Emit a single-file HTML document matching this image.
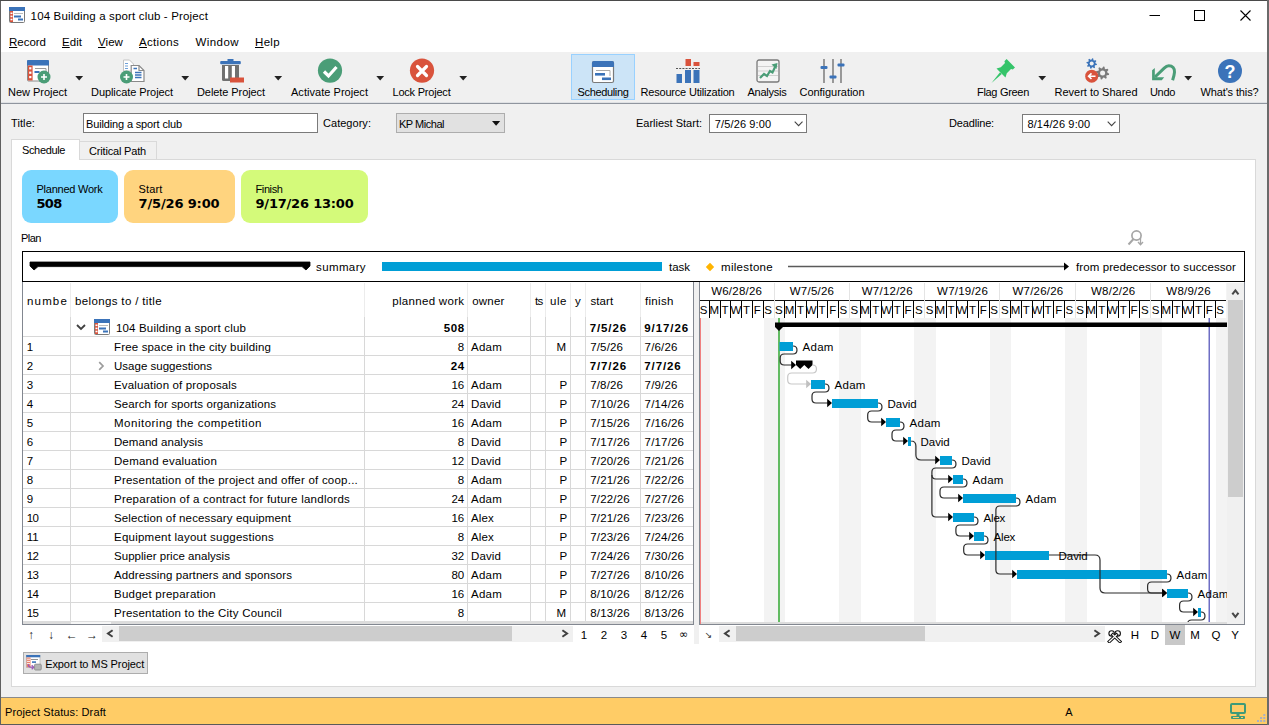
<!DOCTYPE html>
<html lang="en"><head><meta charset="utf-8"><title>104 Building a sport club - Project</title>
<style>
html,body{margin:0;padding:0}
body{width:1269px;height:725px;overflow:hidden;position:relative;background:#f0f0f0;font-family:"Liberation Sans",sans-serif;font-size:11px;color:#000}
.b{position:absolute;box-sizing:border-box}
.t{position:absolute;white-space:pre;display:block}
u{text-decoration:underline;text-underline-offset:1px}
</style></head>
<body>
<div class="b" style="left:0px;top:0px;width:1269px;height:30px;background:#fff"></div>
<div class="b" style="left:0px;top:30px;width:1269px;height:22px;background:#fff"></div>
<div class="b" style="left:0px;top:52px;width:1269px;height:51px;background:#f0f0f0"></div>
<div class="b" style="left:0px;top:102px;width:1269px;height:1px;background:#dfe1e4"></div>
<div class="b" style="left:0px;top:103px;width:1269px;height:1px;background:#8f959e"></div>
<svg class="b" style="left:9px;top:7px;" width="16" height="16" viewBox="0 0 16 16"><rect x="0.5" y="0.5" width="15" height="15" rx="1" fill="#fff" stroke="#7a7a7a"/><rect x="0" y="0" width="16" height="4" fill="#3b73b9"/><rect x="1" y="4" width="3" height="11" fill="#d9533c"/><rect x="1.5" y="5.5" width="2" height="1.6" fill="#fff"/><rect x="1.5" y="8.6" width="2" height="1.6" fill="#fff"/><rect x="1.5" y="11.7" width="2" height="1.6" fill="#fff"/><rect x="5" y="6" width="9" height="1" fill="#bbb"/><rect x="5" y="8.5" width="7" height="2" fill="#3b73b9"/><rect x="9" y="11.5" width="5" height="2" fill="#3b73b9"/></svg>
<span class="t" style="font-size:11.5px;line-height:16px;top:8px;letter-spacing:0.158px;left:30.6px;">104 Building a sport club - Project</span>
<svg class="b" style="left:1149px;top:9px;" width="12" height="12" viewBox="0 0 12 12"><path d="M0.5 6.5H11" stroke="#000" stroke-width="1" fill="none"/></svg>
<svg class="b" style="left:1194px;top:9.5px;" width="12" height="12" viewBox="0 0 12 12"><rect x="0.5" y="0.5" width="10" height="10" stroke="#000" stroke-width="1" fill="none"/></svg>
<svg class="b" style="left:1239.7px;top:9.7px;" width="12" height="12" viewBox="0 0 12 12"><path d="M0.5 0.5L10.5 10.5M10.5 0.5L0.5 10.5" stroke="#000" stroke-width="1.1" fill="none"/></svg>
<span class="t" style="font-size:11.5px;line-height:16px;top:33.5px;letter-spacing:-0.016px;left:9px;"><u>R</u>ecord</span>
<span class="t" style="font-size:11.5px;line-height:16px;top:33.5px;letter-spacing:0.043px;left:62px;"><u>E</u>dit</span>
<span class="t" style="font-size:11.5px;line-height:16px;top:33.5px;letter-spacing:0.066px;left:98px;"><u>V</u>iew</span>
<span class="t" style="font-size:11.5px;line-height:16px;top:33.5px;letter-spacing:0.326px;left:139px;"><u>A</u>ctions</span>
<span class="t" style="font-size:11.5px;line-height:16px;top:33.5px;letter-spacing:0.449px;left:195.4px;">Window</span>
<span class="t" style="font-size:11.5px;line-height:16px;top:33.5px;letter-spacing:0.332px;left:255px;"><u>H</u>elp</span>
<div class="b" style="left:571px;top:54px;width:64px;height:46px;background:#cce4f7;border:1px solid #99d1ff"></div>
<svg class="b" style="left:26px;top:59.3px;overflow:visible" width="24" height="24" viewBox="0 0 24 24"><rect x="1.5" y="1.5" width="21" height="20.5" rx="1" fill="#fff" stroke="#8a8a8a"/><path d="M1 2a1 1 0 0 1 1-1H22a1 1 0 0 1 1 1V6.5H1Z" fill="#3b73b9"/><rect x="2" y="6.5" width="4.6" height="15" fill="#d9533c"/><rect x="3.2" y="8.2" width="2.2" height="2.2" fill="#fff"/><rect x="3.2" y="12.6" width="2.2" height="2.2" fill="#fff"/><rect x="3.2" y="17" width="2.2" height="2.2" fill="#fff"/><path d="M9 9.5H20V13" fill="none" stroke="#9a9a9a" stroke-width="1"/><rect x="8.5" y="12" width="5" height="2" fill="#3b73b9"/><circle cx="18" cy="18" r="6.5" fill="#4a9d77"/><path d="M15 18H21M18 15V21" stroke="#fff" stroke-width="1.6"/></svg>
<span class="t" style="font-size:11px;line-height:16px;top:83.5px;letter-spacing:-0.027px;left:8px;">New Project</span>
<svg class="b" style="left:75.3px;top:75.8px;" width="9" height="5" viewBox="0 0 9 5"><path d="M0.3 0H8.100L4.200 4.600Z" fill="#222"/></svg>
<svg class="b" style="left:120px;top:59px;overflow:visible" width="24" height="24" viewBox="0 0 24 24"><path d="M3.5 1H9.5L13.5 5V12H3.5Z" fill="#fff" stroke="#c4c4c4"/><path d="M5 4.5h3M5 7h3M5 9.500h3" stroke="#6fa0d8" stroke-width="1.2"/><path d="M11.200 6.500H19L24 11.5V22.500H11.200Z" fill="#fff" stroke="#8a8a8a" stroke-width="1.2"/><path d="M19 6.500V11.5H24" fill="none" stroke="#8a8a8a" stroke-width="1.2"/><path d="M13.500 9.500h3.500M15 13.500h6.500M15 16h6.500M15 18.500h6.500" stroke="#3b73b9" stroke-width="1.3"/><circle cx="6.5" cy="18" r="6.5" fill="#4a9d77"/><path d="M3.5 18H9.5M6.5 15V21" stroke="#fff" stroke-width="1.6"/></svg>
<span class="t" style="font-size:11px;line-height:16px;top:83.5px;letter-spacing:-0.068px;left:91px;">Duplicate Project</span>
<svg class="b" style="left:181.3px;top:75.8px;" width="9" height="5" viewBox="0 0 9 5"><path d="M0.3 0H8.100L4.200 4.600Z" fill="#222"/></svg>
<svg class="b" style="left:219px;top:59px;overflow:visible" width="24" height="24" viewBox="0 0 24 24"><rect x="8.5" y="0" width="6" height="2.2" fill="#3b73b9"/><rect x="1.2" y="2" width="20.6" height="3.3" rx="1" fill="#3b73b9"/><path d="M3 6H20V20.5a1.500 1.500 0 0 1-1.500 1.500H4.500A1.500 1.500 0 0 1 3 20.5Z" fill="#707070"/><rect x="6" y="7" width="3.200" height="12.500" fill="#fff"/><rect x="12.800" y="7" width="3.200" height="12.500" fill="#fff"/><rect x="11" y="18.500" width="14" height="5" fill="#d9533c"/></svg>
<span class="t" style="font-size:11px;line-height:16px;top:83.5px;letter-spacing:-0.078px;left:197px;">Delete Project</span>
<svg class="b" style="left:274.3px;top:75.8px;" width="9" height="5" viewBox="0 0 9 5"><path d="M0.3 0H8.100L4.200 4.600Z" fill="#222"/></svg>
<svg class="b" style="left:318.2px;top:59px;overflow:visible" width="24" height="24" viewBox="0 0 24 24"><circle cx="12" cy="11.6" r="12.1" fill="#4a9d77"/><path d="M6 12.5L10.5 17L18.5 8" fill="none" stroke="#fff" stroke-width="3.2" stroke-linecap="butt"/></svg>
<span class="t" style="font-size:11px;line-height:16px;top:83.5px;letter-spacing:0.036px;left:291px;">Activate Project</span>
<svg class="b" style="left:376.3px;top:75.8px;" width="9" height="5" viewBox="0 0 9 5"><path d="M0.3 0H8.100L4.200 4.600Z" fill="#222"/></svg>
<svg class="b" style="left:410px;top:59px;overflow:visible" width="24" height="24" viewBox="0 0 24 24"><circle cx="12" cy="11.6" r="12.1" fill="#d9533c"/><path d="M7.5 7.5L16.5 16.5M16.5 7.5L7.5 16.5" fill="none" stroke="#fff" stroke-width="3.2" stroke-linecap="round"/></svg>
<span class="t" style="font-size:11px;line-height:16px;top:83.5px;letter-spacing:-0.211px;left:392.5px;">Lock Project</span>
<svg class="b" style="left:459.3px;top:75.8px;" width="9" height="5" viewBox="0 0 9 5"><path d="M0.3 0H8.100L4.200 4.600Z" fill="#222"/></svg>
<svg class="b" style="left:591px;top:59.7px;overflow:visible" width="24" height="24" viewBox="0 0 24 24"><rect x="1.5" y="1.5" width="21" height="21" rx="1.5" fill="#fff" stroke="#7a7a7a" stroke-width="1.2"/><path d="M1 3a2 2 0 0 1 2-2H21a2 2 0 0 1 2 2V7H1Z" fill="#3b73b9"/><path d="M5 10.5H19V16" fill="none" stroke="#aaa" stroke-width="1"/><rect x="4" y="13" width="10" height="2.6" fill="#3b73b9"/><rect x="11" y="17.5" width="9" height="2.6" fill="#3b73b9"/></svg>
<span class="t" style="font-size:11px;line-height:16px;top:83.5px;letter-spacing:-0.344px;left:577.5px;">Scheduling</span>
<svg class="b" style="left:676px;top:59px;overflow:visible" width="24" height="24" viewBox="0 0 24 24"><rect x="9.500" y="0" width="5.500" height="7" fill="#d9533c"/><rect x="17.500" y="3" width="6" height="4" fill="#d9533c"/><path d="M0 9.500H24" stroke="#555" stroke-width="1" stroke-dasharray="2 1.200"/><rect x="0.500" y="15" width="5.500" height="9" fill="#3b73b9"/><rect x="9" y="11" width="6" height="13" fill="#3b73b9"/><rect x="17.500" y="11" width="6" height="13" fill="#3b73b9"/></svg>
<span class="t" style="font-size:11px;line-height:16px;top:83.5px;letter-spacing:-0.191px;left:640.5px;">Resource Utilization</span>
<svg class="b" style="left:756px;top:59px;overflow:visible" width="24" height="24" viewBox="0 0 24 24"><rect x="1" y="1" width="22" height="22" rx="2" fill="#f4f4f4" stroke="#7a7a7a" stroke-width="1.3"/><path d="M2 7.5H22M2 12H22M2 16.5H22" stroke="#d0d0d0" stroke-width="1"/><path d="M4 19L8 15L11 17L14 12L16.5 13.5L19.5 7" fill="none" stroke="#4a9d77" stroke-width="2.2" stroke-linejoin="miter"/><path d="M15.5 5.5L21.5 4L20.5 10Z" fill="#4a9d77"/></svg>
<span class="t" style="font-size:11px;line-height:16px;top:83.5px;letter-spacing:-0.246px;left:747.5px;">Analysis</span>
<svg class="b" style="left:820px;top:59px;overflow:visible" width="24" height="24" viewBox="0 0 24 24"><path d="M4 0V24M13 0V24M21 0V24" stroke="#6a6a6a" stroke-width="1.3"/><rect x="0.5" y="7" width="7" height="3" rx="1" fill="#3b73b9"/><rect x="9.5" y="16.5" width="7" height="3" rx="1" fill="#3b73b9"/><rect x="17.5" y="4.5" width="7" height="3" rx="1" fill="#3b73b9"/></svg>
<span class="t" style="font-size:11px;line-height:16px;top:83.5px;letter-spacing:-0.034px;left:799.5px;">Configuration</span>
<svg class="b" style="left:991px;top:59px;overflow:visible" width="24" height="24" viewBox="0 0 24 24"><g fill="#35c46a"><path d="M0.5 24L9 13.2L10.8 15Z"/><path d="M5.5 9.5L14.5 18.5L15.8 14.2L20 10L21.8 10.6L24 8.4L15.6 0L13.4 2.2L14 4L9.8 8.2Z"/></g></svg>
<span class="t" style="font-size:11px;line-height:16px;top:83.5px;letter-spacing:-0.303px;left:977px;">Flag Green</span>
<svg class="b" style="left:1038.3px;top:75.8px;" width="9" height="5" viewBox="0 0 9 5"><path d="M0.3 0H8.100L4.200 4.600Z" fill="#222"/></svg>
<svg class="b" style="left:1083px;top:59px;overflow:visible" width="24" height="24" viewBox="0 0 24 24"><polygon points="13.97,5.02 13.77,6.04 12.07,6.30 11.65,6.92 12.06,8.60 11.20,9.17 9.81,8.15 9.07,8.30 8.18,9.77 7.16,9.57 6.90,7.87 6.28,7.45 4.60,7.86 4.03,7.00 5.05,5.61 4.90,4.87 3.43,3.98 3.63,2.96 5.33,2.70 5.75,2.08 5.34,0.40 6.20,-0.17 7.59,0.85 8.33,0.70 9.22,-0.77 10.24,-0.57 10.50,1.13 11.12,1.55 12.80,1.14 13.37,2.00 12.35,3.39 12.50,4.13" fill="#3b73b9"/><circle cx="8.7" cy="4.5" r="2.01" fill="#f0f0f0"/><polygon points="26.17,14.65 25.92,15.92 23.79,16.24 23.27,17.01 23.79,19.10 22.71,19.82 20.98,18.55 20.07,18.73 18.95,20.57 17.68,20.32 17.36,18.19 16.59,17.67 14.50,18.19 13.78,17.11 15.05,15.38 14.87,14.47 13.03,13.35 13.28,12.08 15.41,11.76 15.93,10.99 15.41,8.90 16.49,8.18 18.22,9.45 19.13,9.27 20.25,7.43 21.52,7.68 21.84,9.81 22.61,10.33 24.70,9.81 25.42,10.89 24.15,12.62 24.33,13.53" fill="#7a7a7a"/><circle cx="19.6" cy="14" r="2.51" fill="#f0f0f0"/><circle cx="8.7" cy="17.2" r="6.5" fill="#d9533c"/><path d="M12.500 17.200H6M8.500 14.400L5.600 17.200L8.500 20" fill="none" stroke="#fff" stroke-width="1.6"/></svg>
<span class="t" style="font-size:11px;line-height:16px;top:83.5px;letter-spacing:-0.01px;left:1054.5px;">Revert to Shared</span>
<svg class="b" style="left:1150px;top:59.7px;overflow:visible" width="24" height="24" viewBox="0 0 24 24"><path d="M5 17L14.200 8.100C16 6.300 17.500 5.700 18.800 5.700C22.500 5.700 24.800 8.500 24.500 12.100C24.300 15 23.500 17.500 22.600 20.200" fill="none" stroke="#4a9d77" stroke-width="3"/><path d="M2.100 20.200V10.300L4.800 8V17.300H14.200L11.800 20.200Z" fill="#4a9d77"/></svg>
<span class="t" style="font-size:11px;line-height:16px;top:83.5px;letter-spacing:-0.324px;left:1150px;">Undo</span>
<svg class="b" style="left:1184.3px;top:75.8px;" width="9" height="5" viewBox="0 0 9 5"><path d="M0.3 0H8.100L4.200 4.600Z" fill="#222"/></svg>
<svg class="b" style="left:1217.8px;top:59px;overflow:visible" width="24" height="24" viewBox="0 0 24 24"><circle cx="12" cy="12" r="12" fill="#3b73b9"/><text x="12" y="18.5" text-anchor="middle" font-family="Liberation Sans, sans-serif" font-weight="bold" font-size="18" fill="#fff">?</text></svg>
<span class="t" style="font-size:11px;line-height:16px;top:83.5px;letter-spacing:-0.132px;left:1200.5px;">What's this?</span>
<span class="t" style="font-size:11px;line-height:16px;top:115px;letter-spacing:0.094px;left:11px;">Title:</span>
<div class="b" style="left:83px;top:113px;width:235px;height:20px;background:#fff;border:1px solid #7a7a7a"></div>
<span class="t" style="font-size:11px;line-height:16px;top:115.5px;letter-spacing:-0.146px;left:86px;">Building a sport club</span>
<span class="t" style="font-size:11px;line-height:16px;top:115px;letter-spacing:0.033px;left:323px;">Category:</span>
<div class="b" style="left:396px;top:113px;width:109px;height:20px;background:#e1e1e1;border:1px solid #adadad"></div>
<span class="t" style="font-size:11px;line-height:16px;top:115.5px;letter-spacing:-0.481px;left:399px;">KP Michal</span>
<svg class="b" style="left:491.7px;top:120.6px;" width="9" height="5" viewBox="0 0 9 5"><path d="M0 0H8.200L4.100 4.800Z" fill="#111"/></svg>
<span class="t" style="font-size:11px;line-height:16px;top:115px;letter-spacing:-0.002px;left:636px;">Earliest Start:</span>
<div class="b" style="left:709px;top:113.8px;width:98px;height:18.8px;background:#fff;border:1px solid #7a7a7a"></div>
<span class="t" style="font-size:11px;line-height:16px;top:115.8px;letter-spacing:0.131px;left:714.8px;">7/5/26 9:00</span>
<svg class="b" style="left:793.5px;top:121px;" width="10" height="6" viewBox="0 0 10 6"><path d="M0.700 0.700L4.600 4.700L8.500 0.700" fill="none" stroke="#444" stroke-width="1.100"/></svg>
<span class="t" style="font-size:11px;line-height:16px;top:115px;letter-spacing:-0.165px;left:949px;">Deadline:</span>
<div class="b" style="left:1022px;top:113.8px;width:98px;height:18.8px;background:#fff;border:1px solid #7a7a7a"></div>
<span class="t" style="font-size:11px;line-height:16px;top:115.8px;letter-spacing:0.152px;left:1027.4px;">8/14/26 9:00</span>
<svg class="b" style="left:1106.5px;top:121px;" width="10" height="6" viewBox="0 0 10 6"><path d="M0.700 0.700L4.600 4.700L8.500 0.700" fill="none" stroke="#444" stroke-width="1.100"/></svg>
<div class="b" style="left:11px;top:159px;width:1245px;height:528px;background:#fff;border:1px solid #d9d9d9"></div>
<div class="b" style="left:79px;top:141px;width:78px;height:19px;background:#f0f0f0;border:1px solid #d9d9d9"></div>
<span class="t" style="font-size:11px;line-height:16px;top:143px;letter-spacing:-0.177px;left:89px;">Critical Path</span>
<div class="b" style="left:11px;top:139px;width:69px;height:21px;background:#fff;border:1px solid #d9d9d9;border-bottom:none"></div>
<span class="t" style="font-size:11px;line-height:16px;top:142px;letter-spacing:-0.359px;left:22px;">Schedule</span>
<div class="b" style="left:22px;top:170px;width:96px;height:53px;background:#7ad7ff;border-radius:9px"></div>
<span class="t" style="font-size:11px;line-height:16px;top:180.5px;letter-spacing:-0.241px;left:36.5px;">Planned Work</span>
<span class="t" style="font-size:13px;line-height:16px;top:195.8px;font-family:'DejaVu Sans', 'Liberation Sans', sans-serif;font-weight:bold;letter-spacing:-0.714px;left:36.5px;">508</span>
<div class="b" style="left:124px;top:170px;width:111px;height:53px;background:#ffd47f;border-radius:9px"></div>
<span class="t" style="font-size:11px;line-height:16px;top:180.5px;letter-spacing:0.153px;left:138.5px;">Start</span>
<span class="t" style="font-size:13px;line-height:16px;top:195.8px;font-family:'DejaVu Sans', 'Liberation Sans', sans-serif;font-weight:bold;letter-spacing:-0.141px;left:138.5px;">7/5/26 9:00</span>
<div class="b" style="left:241px;top:170px;width:127px;height:53px;background:#d4fa7a;border-radius:9px"></div>
<span class="t" style="font-size:11px;line-height:16px;top:180.5px;letter-spacing:-0.391px;left:255.5px;">Finish</span>
<span class="t" style="font-size:13px;line-height:16px;top:195.8px;font-family:'DejaVu Sans', 'Liberation Sans', sans-serif;font-weight:bold;letter-spacing:-0.203px;left:255.5px;">9/17/26 13:00</span>
<span class="t" style="font-size:11px;line-height:16px;top:230px;letter-spacing:-0.508px;left:21px;">Plan</span>
<svg class="b" style="left:1127px;top:229px;" width="18" height="18" viewBox="0 0 18 18"><circle cx="9.5" cy="6.5" r="4.6" fill="none" stroke="#a6a6a6" stroke-width="1.7"/><path d="M6.5 10L1.5 15.5" stroke="#a6a6a6" stroke-width="2"/><path d="M13.5 9V15.5M11 13L13.5 15.8L16 13" fill="none" stroke="#a6a6a6" stroke-width="1.3"/></svg>
<div class="b" style="left:22px;top:251px;width:1223px;height:31px;background:#fff;border:1px solid #000"></div>
<svg class="b" style="left:29px;top:260px;" width="282" height="12" viewBox="0 0 282 12"><path d="M1 2H281V6L277 10L273 6.600H9L5 10L1 6Z" fill="#000" stroke="#000" stroke-width="0.8" stroke-linejoin="round"/></svg>
<span class="t" style="font-size:11.5px;line-height:16px;top:258.5px;letter-spacing:0.388px;left:316px;">summary</span>
<div class="b" style="left:382px;top:262px;width:280px;height:9px;background:#009ed6"></div>
<span class="t" style="font-size:11.5px;line-height:16px;top:258.5px;letter-spacing:-0.023px;left:669px;">task</span>
<svg class="b" style="left:705px;top:262px;" width="10" height="10" viewBox="0 0 10 10"><path d="M5 0.8L9.2 5L5 9.2L0.8 5Z" fill="#ffb400"/></svg>
<span class="t" style="font-size:11.5px;line-height:16px;top:258.5px;letter-spacing:0.309px;left:721px;">milestone</span>
<svg class="b" style="left:788px;top:261px;" width="284" height="10" viewBox="0 0 284 10"><path d="M0 5.5H276" stroke="#5a5a5a" stroke-width="1.6"/><path d="M276 1.5L281 5.5L276 9.5Z" fill="#000"/></svg>
<span class="t" style="font-size:11.5px;line-height:16px;top:258.5px;letter-spacing:0.095px;left:1076px;">from predecessor to successor</span>
<div class="b" style="left:22px;top:282px;width:672px;height:343px;background:#fff;border:1px solid #828790;border-top:none"></div>
<div class="b" style="left:70px;top:283px;width:1px;height:34px;background:#ececec"></div>
<div class="b" style="left:70px;top:317px;width:1px;height:307px;background:#d8d8d8"></div>
<div class="b" style="left:364px;top:283px;width:1px;height:34px;background:#ececec"></div>
<div class="b" style="left:364px;top:317px;width:1px;height:307px;background:#d8d8d8"></div>
<div class="b" style="left:467px;top:283px;width:1px;height:34px;background:#ececec"></div>
<div class="b" style="left:467px;top:317px;width:1px;height:307px;background:#d8d8d8"></div>
<div class="b" style="left:530px;top:283px;width:1px;height:34px;background:#ececec"></div>
<div class="b" style="left:530px;top:317px;width:1px;height:307px;background:#d8d8d8"></div>
<div class="b" style="left:545px;top:283px;width:1px;height:34px;background:#ececec"></div>
<div class="b" style="left:545px;top:317px;width:1px;height:307px;background:#d8d8d8"></div>
<div class="b" style="left:570px;top:283px;width:1px;height:34px;background:#ececec"></div>
<div class="b" style="left:570px;top:317px;width:1px;height:307px;background:#d8d8d8"></div>
<div class="b" style="left:585px;top:283px;width:1px;height:34px;background:#ececec"></div>
<div class="b" style="left:585px;top:317px;width:1px;height:307px;background:#d8d8d8"></div>
<div class="b" style="left:640px;top:283px;width:1px;height:34px;background:#ececec"></div>
<div class="b" style="left:640px;top:317px;width:1px;height:307px;background:#d8d8d8"></div>
<div class="b" style="left:23px;top:336px;width:670px;height:1px;background:#d8d8d8"></div>
<div class="b" style="left:23px;top:355px;width:670px;height:1px;background:#d8d8d8"></div>
<div class="b" style="left:23px;top:374px;width:670px;height:1px;background:#d8d8d8"></div>
<div class="b" style="left:23px;top:393px;width:670px;height:1px;background:#d8d8d8"></div>
<div class="b" style="left:23px;top:412px;width:670px;height:1px;background:#d8d8d8"></div>
<div class="b" style="left:23px;top:431px;width:670px;height:1px;background:#d8d8d8"></div>
<div class="b" style="left:23px;top:450px;width:670px;height:1px;background:#d8d8d8"></div>
<div class="b" style="left:23px;top:469px;width:670px;height:1px;background:#d8d8d8"></div>
<div class="b" style="left:23px;top:488px;width:670px;height:1px;background:#d8d8d8"></div>
<div class="b" style="left:23px;top:507px;width:670px;height:1px;background:#d8d8d8"></div>
<div class="b" style="left:23px;top:526px;width:670px;height:1px;background:#d8d8d8"></div>
<div class="b" style="left:23px;top:545px;width:670px;height:1px;background:#d8d8d8"></div>
<div class="b" style="left:23px;top:564px;width:670px;height:1px;background:#d8d8d8"></div>
<div class="b" style="left:23px;top:583px;width:670px;height:1px;background:#d8d8d8"></div>
<div class="b" style="left:23px;top:602px;width:670px;height:1px;background:#d8d8d8"></div>
<div class="b" style="left:23px;top:621px;width:670px;height:1px;background:#d8d8d8"></div>
<div class="b" style="left:23px;top:621px;width:670px;height:3px;background:#dcdcdc"></div>
<div class="b" style="left:71px;top:622px;width:40px;height:2px;background:#f6f6f6"></div>
<span class="t" style="font-size:11.5px;line-height:16px;top:292.5px;letter-spacing:1.167px;left:27px;width:40.4px;overflow:hidden;">number</span>
<span class="t" style="font-size:11.5px;line-height:16px;top:292.5px;letter-spacing:0.358px;left:75px;">belongs to / title</span>
<span class="t" style="font-size:11.5px;line-height:16px;top:292.5px;letter-spacing:0.299px;right:804.701px;">planned work</span>
<span class="t" style="font-size:11.5px;line-height:16px;top:292.5px;letter-spacing:0.234px;left:472.2px;">owner</span>
<span class="t" style="font-size:11.5px;line-height:16px;top:292.5px;letter-spacing:-0.727px;left:535px;">ts</span>
<span class="t" style="font-size:11.5px;line-height:16px;top:292.5px;letter-spacing:0.547px;left:550px;">ule</span>
<span class="t" style="font-size:11.5px;line-height:16px;top:292.5px;left:575px;">y</span>
<span class="t" style="font-size:11.5px;line-height:16px;top:292.5px;letter-spacing:0.065px;left:590.5px;">start</span>
<span class="t" style="font-size:11.5px;line-height:16px;top:292.5px;letter-spacing:0.307px;left:645px;">finish</span>
<svg class="b" style="left:76px;top:324px;" width="10" height="7" viewBox="0 0 10 7"><path d="M1 1L5 5L9 1" fill="none" stroke="#404040" stroke-width="1.8"/></svg>
<svg class="b" style="left:94px;top:319px;" width="16" height="16" viewBox="0 0 16 16"><rect x="0.5" y="0.5" width="15" height="15" rx="1" fill="#fff" stroke="#7a7a7a"/><rect x="0" y="0" width="16" height="4" fill="#3b73b9"/><rect x="1" y="4" width="3" height="11" fill="#d9533c"/><rect x="1.5" y="5.5" width="2" height="1.6" fill="#fff"/><rect x="1.5" y="8.6" width="2" height="1.6" fill="#fff"/><rect x="1.5" y="11.7" width="2" height="1.6" fill="#fff"/><rect x="5" y="6" width="9" height="1" fill="#bbb"/><rect x="5" y="8.5" width="7" height="2" fill="#3b73b9"/><rect x="9" y="11.5" width="5" height="2" fill="#3b73b9"/></svg>
<span class="t" style="font-size:11.5px;line-height:16px;top:319.5px;letter-spacing:0.162px;left:116px;">104 Building a sport club</span>
<span class="t" style="font-size:11.5px;line-height:16px;top:319.5px;font-weight:bold;letter-spacing:0.604px;right:804.196px;">508</span>
<span class="t" style="font-size:11.5px;line-height:16px;top:319.5px;font-weight:bold;letter-spacing:0.886px;left:589.7px;">7/5/26</span>
<span class="t" style="font-size:11.5px;line-height:16px;top:319.5px;font-weight:bold;letter-spacing:0.904px;left:644.3px;">9/17/26</span>
<span class="t" style="font-size:11.5px;line-height:16px;top:338.5px;letter-spacing:-0.406px;left:26.8px;">1</span>
<span class="t" style="font-size:11.5px;line-height:16px;top:338.5px;letter-spacing:0.157px;left:114px;">Free space in the city building</span>
<span class="t" style="font-size:11.5px;line-height:16px;top:338.5px;letter-spacing:-0.206px;right:805.006px;">8</span>
<span class="t" style="font-size:11.5px;line-height:16px;top:338.5px;letter-spacing:0.238px;left:471px;">Adam</span>
<span class="t" style="font-size:11.5px;line-height:16px;top:338.5px;left:556.5px;">M</span>
<span class="t" style="font-size:11.5px;line-height:16px;top:338.5px;letter-spacing:0.169px;left:590.2px;">7/5/26</span>
<span class="t" style="font-size:11.5px;line-height:16px;top:338.5px;letter-spacing:0.169px;left:644.6px;">7/6/26</span>
<span class="t" style="font-size:11.5px;line-height:16px;top:357.5px;letter-spacing:-0.406px;left:26.8px;">2</span>
<span class="t" style="font-size:11.5px;line-height:16px;top:357.5px;letter-spacing:0.011px;left:114px;">Usage suggestions</span>
<svg class="b" style="left:97.7px;top:361px;" width="7" height="10" viewBox="0 0 7 10"><path d="M1.200 1.200L5 5L1.200 8.800" fill="none" stroke="#9c9c9c" stroke-width="1.700"/></svg>
<span class="t" style="font-size:11.5px;line-height:16px;top:357.5px;font-weight:bold;letter-spacing:0.602px;right:804.198px;">24</span>
<span class="t" style="font-size:11.5px;line-height:16px;top:357.5px;font-weight:bold;letter-spacing:0.886px;left:589.7px;">7/7/26</span>
<span class="t" style="font-size:11.5px;line-height:16px;top:357.5px;font-weight:bold;letter-spacing:0.886px;left:644.3px;">7/7/26</span>
<span class="t" style="font-size:11.5px;line-height:16px;top:376.5px;letter-spacing:-0.406px;left:26.8px;">3</span>
<span class="t" style="font-size:11.5px;line-height:16px;top:376.5px;letter-spacing:0.149px;left:114px;">Evaluation of proposals</span>
<span class="t" style="font-size:11.5px;line-height:16px;top:376.5px;letter-spacing:-0.198px;right:804.998px;">16</span>
<span class="t" style="font-size:11.5px;line-height:16px;top:376.5px;letter-spacing:0.238px;left:471px;">Adam</span>
<span class="t" style="font-size:11.5px;line-height:16px;top:376.5px;left:559.6px;">P</span>
<span class="t" style="font-size:11.5px;line-height:16px;top:376.5px;letter-spacing:0.169px;left:590.2px;">7/8/26</span>
<span class="t" style="font-size:11.5px;line-height:16px;top:376.5px;letter-spacing:0.169px;left:644.6px;">7/9/26</span>
<span class="t" style="font-size:11.5px;line-height:16px;top:395.5px;letter-spacing:-0.406px;left:26.8px;">4</span>
<span class="t" style="font-size:11.5px;line-height:16px;top:395.5px;letter-spacing:0.091px;left:114px;">Search for sports organizations</span>
<span class="t" style="font-size:11.5px;line-height:16px;top:395.5px;letter-spacing:-0.198px;right:804.998px;">24</span>
<span class="t" style="font-size:11.5px;line-height:16px;top:395.5px;letter-spacing:0.119px;left:471px;">David</span>
<span class="t" style="font-size:11.5px;line-height:16px;top:395.5px;left:559.6px;">P</span>
<span class="t" style="font-size:11.5px;line-height:16px;top:395.5px;letter-spacing:0.175px;left:590.2px;">7/10/26</span>
<span class="t" style="font-size:11.5px;line-height:16px;top:395.5px;letter-spacing:0.175px;left:644.6px;">7/14/26</span>
<span class="t" style="font-size:11.5px;line-height:16px;top:414.5px;letter-spacing:-0.406px;left:26.8px;">5</span>
<span class="t" style="font-size:11.5px;line-height:16px;top:414.5px;letter-spacing:0.504px;left:114px;">Monitoring the competition</span>
<span class="t" style="font-size:11.5px;line-height:16px;top:414.5px;letter-spacing:-0.198px;right:804.998px;">16</span>
<span class="t" style="font-size:11.5px;line-height:16px;top:414.5px;letter-spacing:0.238px;left:471px;">Adam</span>
<span class="t" style="font-size:11.5px;line-height:16px;top:414.5px;left:559.6px;">P</span>
<span class="t" style="font-size:11.5px;line-height:16px;top:414.5px;letter-spacing:0.175px;left:590.2px;">7/15/26</span>
<span class="t" style="font-size:11.5px;line-height:16px;top:414.5px;letter-spacing:0.175px;left:644.6px;">7/16/26</span>
<span class="t" style="font-size:11.5px;line-height:16px;top:433.5px;letter-spacing:-0.406px;left:26.8px;">6</span>
<span class="t" style="font-size:11.5px;line-height:16px;top:433.5px;letter-spacing:0.052px;left:114px;">Demand analysis</span>
<span class="t" style="font-size:11.5px;line-height:16px;top:433.5px;letter-spacing:-0.206px;right:805.006px;">8</span>
<span class="t" style="font-size:11.5px;line-height:16px;top:433.5px;letter-spacing:0.119px;left:471px;">David</span>
<span class="t" style="font-size:11.5px;line-height:16px;top:433.5px;left:559.6px;">P</span>
<span class="t" style="font-size:11.5px;line-height:16px;top:433.5px;letter-spacing:0.175px;left:590.2px;">7/17/26</span>
<span class="t" style="font-size:11.5px;line-height:16px;top:433.5px;letter-spacing:0.175px;left:644.6px;">7/17/26</span>
<span class="t" style="font-size:11.5px;line-height:16px;top:452.5px;letter-spacing:-0.406px;left:26.8px;">7</span>
<span class="t" style="font-size:11.5px;line-height:16px;top:452.5px;letter-spacing:0.23px;left:114px;">Demand evaluation</span>
<span class="t" style="font-size:11.5px;line-height:16px;top:452.5px;letter-spacing:-0.198px;right:804.998px;">12</span>
<span class="t" style="font-size:11.5px;line-height:16px;top:452.5px;letter-spacing:0.119px;left:471px;">David</span>
<span class="t" style="font-size:11.5px;line-height:16px;top:452.5px;left:559.6px;">P</span>
<span class="t" style="font-size:11.5px;line-height:16px;top:452.5px;letter-spacing:0.175px;left:590.2px;">7/20/26</span>
<span class="t" style="font-size:11.5px;line-height:16px;top:452.5px;letter-spacing:0.175px;left:644.6px;">7/21/26</span>
<span class="t" style="font-size:11.5px;line-height:16px;top:471.5px;letter-spacing:-0.406px;left:26.8px;">8</span>
<span class="t" style="font-size:11.5px;line-height:16px;top:471.5px;letter-spacing:0.226px;left:114px;">Presentation of the project and offer of coop...</span>
<span class="t" style="font-size:11.5px;line-height:16px;top:471.5px;letter-spacing:-0.206px;right:805.006px;">8</span>
<span class="t" style="font-size:11.5px;line-height:16px;top:471.5px;letter-spacing:0.238px;left:471px;">Adam</span>
<span class="t" style="font-size:11.5px;line-height:16px;top:471.5px;left:559.6px;">P</span>
<span class="t" style="font-size:11.5px;line-height:16px;top:471.5px;letter-spacing:0.175px;left:590.2px;">7/21/26</span>
<span class="t" style="font-size:11.5px;line-height:16px;top:471.5px;letter-spacing:0.175px;left:644.6px;">7/22/26</span>
<span class="t" style="font-size:11.5px;line-height:16px;top:490.5px;letter-spacing:-0.406px;left:26.8px;">9</span>
<span class="t" style="font-size:11.5px;line-height:16px;top:490.5px;letter-spacing:0.239px;left:114px;">Preparation of a contract for future landlords</span>
<span class="t" style="font-size:11.5px;line-height:16px;top:490.5px;letter-spacing:-0.198px;right:804.998px;">24</span>
<span class="t" style="font-size:11.5px;line-height:16px;top:490.5px;letter-spacing:0.238px;left:471px;">Adam</span>
<span class="t" style="font-size:11.5px;line-height:16px;top:490.5px;left:559.6px;">P</span>
<span class="t" style="font-size:11.5px;line-height:16px;top:490.5px;letter-spacing:0.175px;left:590.2px;">7/22/26</span>
<span class="t" style="font-size:11.5px;line-height:16px;top:490.5px;letter-spacing:0.175px;left:644.6px;">7/27/26</span>
<span class="t" style="font-size:11.5px;line-height:16px;top:509.5px;letter-spacing:-0.598px;left:26.8px;">10</span>
<span class="t" style="font-size:11.5px;line-height:16px;top:509.5px;letter-spacing:0.137px;left:114px;">Selection of necessary equipment</span>
<span class="t" style="font-size:11.5px;line-height:16px;top:509.5px;letter-spacing:-0.198px;right:804.998px;">16</span>
<span class="t" style="font-size:11.5px;line-height:16px;top:509.5px;letter-spacing:0.156px;left:471px;">Alex</span>
<span class="t" style="font-size:11.5px;line-height:16px;top:509.5px;left:559.6px;">P</span>
<span class="t" style="font-size:11.5px;line-height:16px;top:509.5px;letter-spacing:0.175px;left:590.2px;">7/21/26</span>
<span class="t" style="font-size:11.5px;line-height:16px;top:509.5px;letter-spacing:0.175px;left:644.6px;">7/23/26</span>
<span class="t" style="font-size:11.5px;line-height:16px;top:528.5px;letter-spacing:-0.177px;left:26.8px;">11</span>
<span class="t" style="font-size:11.5px;line-height:16px;top:528.5px;letter-spacing:0.234px;left:114px;">Equipment layout suggestions</span>
<span class="t" style="font-size:11.5px;line-height:16px;top:528.5px;letter-spacing:-0.206px;right:805.006px;">8</span>
<span class="t" style="font-size:11.5px;line-height:16px;top:528.5px;letter-spacing:0.156px;left:471px;">Alex</span>
<span class="t" style="font-size:11.5px;line-height:16px;top:528.5px;left:559.6px;">P</span>
<span class="t" style="font-size:11.5px;line-height:16px;top:528.5px;letter-spacing:0.175px;left:590.2px;">7/23/26</span>
<span class="t" style="font-size:11.5px;line-height:16px;top:528.5px;letter-spacing:0.175px;left:644.6px;">7/24/26</span>
<span class="t" style="font-size:11.5px;line-height:16px;top:547.5px;letter-spacing:-0.598px;left:26.8px;">12</span>
<span class="t" style="font-size:11.5px;line-height:16px;top:547.5px;letter-spacing:0.041px;left:114px;">Supplier price analysis</span>
<span class="t" style="font-size:11.5px;line-height:16px;top:547.5px;letter-spacing:-0.198px;right:804.998px;">32</span>
<span class="t" style="font-size:11.5px;line-height:16px;top:547.5px;letter-spacing:0.119px;left:471px;">David</span>
<span class="t" style="font-size:11.5px;line-height:16px;top:547.5px;left:559.6px;">P</span>
<span class="t" style="font-size:11.5px;line-height:16px;top:547.5px;letter-spacing:0.175px;left:590.2px;">7/24/26</span>
<span class="t" style="font-size:11.5px;line-height:16px;top:547.5px;letter-spacing:0.175px;left:644.6px;">7/30/26</span>
<span class="t" style="font-size:11.5px;line-height:16px;top:566.5px;letter-spacing:-0.598px;left:26.8px;">13</span>
<span class="t" style="font-size:11.5px;line-height:16px;top:566.5px;letter-spacing:0.089px;left:114px;">Addressing partners and sponsors</span>
<span class="t" style="font-size:11.5px;line-height:16px;top:566.5px;letter-spacing:-0.198px;right:804.998px;">80</span>
<span class="t" style="font-size:11.5px;line-height:16px;top:566.5px;letter-spacing:0.238px;left:471px;">Adam</span>
<span class="t" style="font-size:11.5px;line-height:16px;top:566.5px;left:559.6px;">P</span>
<span class="t" style="font-size:11.5px;line-height:16px;top:566.5px;letter-spacing:0.175px;left:590.2px;">7/27/26</span>
<span class="t" style="font-size:11.5px;line-height:16px;top:566.5px;letter-spacing:0.175px;left:644.6px;">8/10/26</span>
<span class="t" style="font-size:11.5px;line-height:16px;top:585.5px;letter-spacing:-0.598px;left:26.8px;">14</span>
<span class="t" style="font-size:11.5px;line-height:16px;top:585.5px;letter-spacing:0.232px;left:114px;">Budget preparation</span>
<span class="t" style="font-size:11.5px;line-height:16px;top:585.5px;letter-spacing:-0.198px;right:804.998px;">16</span>
<span class="t" style="font-size:11.5px;line-height:16px;top:585.5px;letter-spacing:0.238px;left:471px;">Adam</span>
<span class="t" style="font-size:11.5px;line-height:16px;top:585.5px;left:559.6px;">P</span>
<span class="t" style="font-size:11.5px;line-height:16px;top:585.5px;letter-spacing:0.175px;left:590.2px;">8/10/26</span>
<span class="t" style="font-size:11.5px;line-height:16px;top:585.5px;letter-spacing:0.175px;left:644.6px;">8/12/26</span>
<span class="t" style="font-size:11.5px;line-height:16px;top:604.5px;letter-spacing:-0.598px;left:26.8px;">15</span>
<span class="t" style="font-size:11.5px;line-height:16px;top:604.5px;letter-spacing:0.216px;left:114px;">Presentation to the City Council</span>
<span class="t" style="font-size:11.5px;line-height:16px;top:604.5px;letter-spacing:-0.206px;right:805.006px;">8</span>
<span class="t" style="font-size:11.5px;line-height:16px;top:604.5px;left:556.5px;">M</span>
<span class="t" style="font-size:11.5px;line-height:16px;top:604.5px;letter-spacing:0.175px;left:590.2px;">8/13/26</span>
<span class="t" style="font-size:11.5px;line-height:16px;top:604.5px;letter-spacing:0.175px;left:644.6px;">8/13/26</span>
<div class="b" style="left:699px;top:282px;width:546px;height:343px;background:#fff;border:1px solid #828790;border-top:none"></div>
<svg class="b" style="left:700px;top:282px" width="527" height="342" viewBox="0 0 527 342"><rect x="-12" y="36" width="22" height="306" fill="#f3f3f3"/><rect x="64" y="36" width="21" height="306" fill="#f3f3f3"/><rect x="139" y="36" width="22" height="306" fill="#f3f3f3"/><rect x="214" y="36" width="22" height="306" fill="#f3f3f3"/><rect x="290" y="36" width="21" height="306" fill="#f3f3f3"/><rect x="365" y="36" width="22" height="306" fill="#f3f3f3"/><rect x="440" y="36" width="22" height="306" fill="#f3f3f3"/><rect x="516" y="36" width="21" height="306" fill="#f3f3f3"/><rect x="591" y="36" width="22" height="306" fill="#f3f3f3"/><rect x="0" y="0" width="527" height="36" fill="#fff"/><rect x="0" y="18" width="527" height="1" fill="#111"/><rect x="9" y="19" width="1" height="17" fill="#000"/><rect x="20" y="19" width="1" height="17" fill="#000"/><rect x="30" y="19" width="1" height="17" fill="#000"/><rect x="41" y="19" width="1" height="17" fill="#000"/><rect x="52" y="19" width="1" height="17" fill="#000"/><rect x="63" y="19" width="1" height="17" fill="#000"/><rect x="74" y="1" width="1" height="35" fill="#e4e4e4"/><rect x="84" y="19" width="1" height="17" fill="#000"/><rect x="95" y="19" width="1" height="17" fill="#000"/><rect x="106" y="19" width="1" height="17" fill="#000"/><rect x="117" y="19" width="1" height="17" fill="#000"/><rect x="127" y="19" width="1" height="17" fill="#000"/><rect x="138" y="19" width="1" height="17" fill="#000"/><rect x="149" y="1" width="1" height="35" fill="#e4e4e4"/><rect x="160" y="19" width="1" height="17" fill="#000"/><rect x="170" y="19" width="1" height="17" fill="#000"/><rect x="181" y="19" width="1" height="17" fill="#000"/><rect x="192" y="19" width="1" height="17" fill="#000"/><rect x="203" y="19" width="1" height="17" fill="#000"/><rect x="213" y="19" width="1" height="17" fill="#000"/><rect x="224" y="1" width="1" height="35" fill="#e4e4e4"/><rect x="235" y="19" width="1" height="17" fill="#000"/><rect x="246" y="19" width="1" height="17" fill="#000"/><rect x="256" y="19" width="1" height="17" fill="#000"/><rect x="267" y="19" width="1" height="17" fill="#000"/><rect x="278" y="19" width="1" height="17" fill="#000"/><rect x="289" y="19" width="1" height="17" fill="#000"/><rect x="299" y="1" width="1" height="35" fill="#e4e4e4"/><rect x="310" y="19" width="1" height="17" fill="#000"/><rect x="321" y="19" width="1" height="17" fill="#000"/><rect x="332" y="19" width="1" height="17" fill="#000"/><rect x="343" y="19" width="1" height="17" fill="#000"/><rect x="353" y="19" width="1" height="17" fill="#000"/><rect x="364" y="19" width="1" height="17" fill="#000"/><rect x="375" y="1" width="1" height="35" fill="#e4e4e4"/><rect x="386" y="19" width="1" height="17" fill="#000"/><rect x="396" y="19" width="1" height="17" fill="#000"/><rect x="407" y="19" width="1" height="17" fill="#000"/><rect x="418" y="19" width="1" height="17" fill="#000"/><rect x="429" y="19" width="1" height="17" fill="#000"/><rect x="439" y="19" width="1" height="17" fill="#000"/><rect x="450" y="1" width="1" height="35" fill="#e4e4e4"/><rect x="461" y="19" width="1" height="17" fill="#000"/><rect x="472" y="19" width="1" height="17" fill="#000"/><rect x="482" y="19" width="1" height="17" fill="#000"/><rect x="493" y="19" width="1" height="17" fill="#000"/><rect x="504" y="19" width="1" height="17" fill="#000"/><rect x="515" y="19" width="1" height="17" fill="#000"/><rect x="526" y="1" width="1" height="35" fill="#f4f4f4"/><rect x="0" y="36" width="1" height="306" fill="#f08080"/><rect x="78" y="36" width="2" height="306" fill="#62bb62"/><rect x="508.5" y="36" width="1.5" height="306" fill="#6e6ec4"/><path d="M75 40.4H527V45H83L79 49L75 45Z" fill="#000"/><rect x="79.5" y="60" width="13.5" height="9" fill="#009ed6"/><rect x="111" y="98" width="14" height="9" fill="#009ed6"/><rect x="132" y="117" width="46" height="9" fill="#009ed6"/><rect x="186" y="136" width="14" height="9" fill="#009ed6"/><rect x="208" y="155" width="3" height="9" fill="#009ed6"/><rect x="240" y="174" width="12" height="9" fill="#009ed6"/><rect x="253" y="193" width="10" height="9" fill="#009ed6"/><rect x="263" y="212" width="53" height="9" fill="#009ed6"/><rect x="253" y="231" width="21" height="9" fill="#009ed6"/><rect x="274" y="250" width="10" height="9" fill="#009ed6"/><rect x="285" y="269" width="64" height="9" fill="#009ed6"/><rect x="317" y="288" width="150" height="9" fill="#009ed6"/><rect x="467" y="307" width="21" height="9" fill="#009ed6"/><rect x="498" y="326" width="3" height="9" fill="#009ed6"/><path d="M96 78.5H112.5V83L108.5 87L104.3 83L100.2 87L96 83Z" fill="#000"/><path d="M93 64C98.3 64 98.3 72 93 72H84.2Q80.2 72 80.2 76V79Q80.2 83 84.2 83H92" fill="none" stroke="#2b2b2b" stroke-width="1.2"/><path d="M91.2 78.8L96 83L91.2 87.2Z" fill="#000"/><path d="M112.5 83C117.8 83 117.8 91 112.5 91H91.7Q87.7 91 87.7 95V98Q87.7 102 91.7 102H107" fill="none" stroke="#c8c8c8" stroke-width="1.2"/><path d="M106.2 97.8L111 102L106.2 106.2Z" fill="#c0c0c0"/><path d="M125 102C130.3 102 130.3 110 125 110H116Q112 110 112 114V117Q112 121 116 121H128" fill="none" stroke="#2b2b2b" stroke-width="1.2"/><path d="M127.2 116.8L132 121L127.2 125.2Z" fill="#000"/><path d="M178 121C183.3 121 183.3 129 178 129H171.7Q167.7 129 167.7 133V136Q167.7 140 171.7 140H182" fill="none" stroke="#2b2b2b" stroke-width="1.2"/><path d="M181.2 135.8L186 140L181.2 144.2Z" fill="#000"/><path d="M200 140C205.3 140 205.3 148 200 148H196Q192 148 192 152V155Q192 159 196 159H204" fill="none" stroke="#2b2b2b" stroke-width="1.2"/><path d="M203.2 154.8L208 159L203.2 163.2Z" fill="#000"/><path d="M211 159H210.9Q215.9 159 215.9 164V173Q215.9 178 220.9 178H236" fill="none" stroke="#2b2b2b" stroke-width="1.2"/><path d="M235.2 173.8L240 178L235.2 182.2Z" fill="#000"/><path d="M252 178C257.3 178 257.3 186 252 186H235.9Q231.9 186 231.9 190V231Q231.9 235 235.9 235H249" fill="none" stroke="#2b2b2b" stroke-width="1.2"/><path d="M231.9 193Q231.9 197 235.9 197H249" fill="none" stroke="#2b2b2b" stroke-width="1.2"/><path d="M248.2 192.8L253 197L248.2 201.2Z" fill="#000"/><path d="M248.2 230.8L253 235L248.2 239.2Z" fill="#000"/><path d="M263 197C268.3 197 268.3 205 263 205H244Q240 205 240 209V212Q240 216 244 216H259" fill="none" stroke="#2b2b2b" stroke-width="1.2"/><path d="M258.2 211.8L263 216L258.2 220.2Z" fill="#000"/><path d="M316 216C321.3 216 321.3 224 316 224H299.9Q295.9 224 295.9 228V288Q295.9 292 299.9 292H313" fill="none" stroke="#2b2b2b" stroke-width="1.2"/><path d="M312.2 287.8L317 292L312.2 296.2Z" fill="#000"/><path d="M274 235C279.3 235 279.3 243 274 243H259.9Q255.9 243 255.9 247V250Q255.9 254 259.9 254H270" fill="none" stroke="#2b2b2b" stroke-width="1.2"/><path d="M269.2 249.8L274 254L269.2 258.2Z" fill="#000"/><path d="M284 254C289.3 254 289.3 262 284 262H267.7Q263.7 262 263.7 266V269Q263.7 273 267.7 273H281" fill="none" stroke="#2b2b2b" stroke-width="1.2"/><path d="M280.2 268.8L285 273L280.2 277.2Z" fill="#000"/><path d="M349 273H395Q400 273 400 278V306Q400 311 405 311H463" fill="none" stroke="#2b2b2b" stroke-width="1.2"/><path d="M462.2 306.8L467 311L462.2 315.2Z" fill="#000"/><path d="M467 292C472.3 292 472.3 300 467 300H451.6Q447.6 300 447.6 304V307Q447.6 311 451.6 311H463" fill="none" stroke="#2b2b2b" stroke-width="1.2"/><path d="M462.2 306.8L467 311L462.2 315.2Z" fill="#000"/><path d="M488 311C493.3 311 493.3 319 488 319H483.6Q479.6 319 479.6 323V326Q479.6 330 483.6 330H494" fill="none" stroke="#2b2b2b" stroke-width="1.2"/><path d="M493.2 325.8L498 330L493.2 334.2Z" fill="#000"/><path d="M501 330C506.3 330 506.3 338 501 338H491.6Q487.6 338 487.6 342V345Q487.6 349 491.6 349H506" fill="none" stroke="#2b2b2b" stroke-width="1.2"/><path d="M505.2 344.8L510 349L505.2 353.2Z" fill="#000"/><rect x="1" y="340" width="527" height="2" fill="#dcdcdc"/></svg>
<span class="t" style="font-size:11.5px;line-height:16px;top:283.2px;letter-spacing:0.221px;left:711.16px;">W6/28/26</span>
<span class="t" style="font-size:11.5px;line-height:16px;top:301.5px;left:553.58px;width:300px;text-align:center;">S</span>
<span class="t" style="font-size:11.5px;line-height:16px;top:301.5px;left:564.34px;width:300px;text-align:center;">M</span>
<span class="t" style="font-size:11.5px;line-height:16px;top:301.5px;left:575.1px;width:300px;text-align:center;">T</span>
<span class="t" style="font-size:11.5px;line-height:16px;top:301.5px;left:585.86px;width:300px;text-align:center;">W</span>
<span class="t" style="font-size:11.5px;line-height:16px;top:301.5px;left:596.62px;width:300px;text-align:center;">T</span>
<span class="t" style="font-size:11.5px;line-height:16px;top:301.5px;left:607.38px;width:300px;text-align:center;">F</span>
<span class="t" style="font-size:11.5px;line-height:16px;top:301.5px;left:618.14px;width:300px;text-align:center;">S</span>
<span class="t" style="font-size:11.5px;line-height:16px;top:283.2px;letter-spacing:0.239px;left:789.73px;">W7/5/26</span>
<span class="t" style="font-size:11.5px;line-height:16px;top:301.5px;left:628.9px;width:300px;text-align:center;">S</span>
<span class="t" style="font-size:11.5px;line-height:16px;top:301.5px;left:639.66px;width:300px;text-align:center;">M</span>
<span class="t" style="font-size:11.5px;line-height:16px;top:301.5px;left:650.42px;width:300px;text-align:center;">T</span>
<span class="t" style="font-size:11.5px;line-height:16px;top:301.5px;left:661.18px;width:300px;text-align:center;">W</span>
<span class="t" style="font-size:11.5px;line-height:16px;top:301.5px;left:671.94px;width:300px;text-align:center;">T</span>
<span class="t" style="font-size:11.5px;line-height:16px;top:301.5px;left:682.7px;width:300px;text-align:center;">F</span>
<span class="t" style="font-size:11.5px;line-height:16px;top:301.5px;left:693.46px;width:300px;text-align:center;">S</span>
<span class="t" style="font-size:11.5px;line-height:16px;top:283.2px;letter-spacing:0.221px;left:861.8px;">W7/12/26</span>
<span class="t" style="font-size:11.5px;line-height:16px;top:301.5px;left:704.22px;width:300px;text-align:center;">S</span>
<span class="t" style="font-size:11.5px;line-height:16px;top:301.5px;left:714.98px;width:300px;text-align:center;">M</span>
<span class="t" style="font-size:11.5px;line-height:16px;top:301.5px;left:725.74px;width:300px;text-align:center;">T</span>
<span class="t" style="font-size:11.5px;line-height:16px;top:301.5px;left:736.5px;width:300px;text-align:center;">W</span>
<span class="t" style="font-size:11.5px;line-height:16px;top:301.5px;left:747.26px;width:300px;text-align:center;">T</span>
<span class="t" style="font-size:11.5px;line-height:16px;top:301.5px;left:758.02px;width:300px;text-align:center;">F</span>
<span class="t" style="font-size:11.5px;line-height:16px;top:301.5px;left:768.78px;width:300px;text-align:center;">S</span>
<span class="t" style="font-size:11.5px;line-height:16px;top:283.2px;letter-spacing:0.221px;left:937.12px;">W7/19/26</span>
<span class="t" style="font-size:11.5px;line-height:16px;top:301.5px;left:779.54px;width:300px;text-align:center;">S</span>
<span class="t" style="font-size:11.5px;line-height:16px;top:301.5px;left:790.3px;width:300px;text-align:center;">M</span>
<span class="t" style="font-size:11.5px;line-height:16px;top:301.5px;left:801.06px;width:300px;text-align:center;">T</span>
<span class="t" style="font-size:11.5px;line-height:16px;top:301.5px;left:811.82px;width:300px;text-align:center;">W</span>
<span class="t" style="font-size:11.5px;line-height:16px;top:301.5px;left:822.58px;width:300px;text-align:center;">T</span>
<span class="t" style="font-size:11.5px;line-height:16px;top:301.5px;left:833.34px;width:300px;text-align:center;">F</span>
<span class="t" style="font-size:11.5px;line-height:16px;top:301.5px;left:844.1px;width:300px;text-align:center;">S</span>
<span class="t" style="font-size:11.5px;line-height:16px;top:283.2px;letter-spacing:0.221px;left:1012.44px;">W7/26/26</span>
<span class="t" style="font-size:11.5px;line-height:16px;top:301.5px;left:854.86px;width:300px;text-align:center;">S</span>
<span class="t" style="font-size:11.5px;line-height:16px;top:301.5px;left:865.62px;width:300px;text-align:center;">M</span>
<span class="t" style="font-size:11.5px;line-height:16px;top:301.5px;left:876.38px;width:300px;text-align:center;">T</span>
<span class="t" style="font-size:11.5px;line-height:16px;top:301.5px;left:887.14px;width:300px;text-align:center;">W</span>
<span class="t" style="font-size:11.5px;line-height:16px;top:301.5px;left:897.9px;width:300px;text-align:center;">T</span>
<span class="t" style="font-size:11.5px;line-height:16px;top:301.5px;left:908.66px;width:300px;text-align:center;">F</span>
<span class="t" style="font-size:11.5px;line-height:16px;top:301.5px;left:919.42px;width:300px;text-align:center;">S</span>
<span class="t" style="font-size:11.5px;line-height:16px;top:283.2px;letter-spacing:0.239px;left:1091.01px;">W8/2/26</span>
<span class="t" style="font-size:11.5px;line-height:16px;top:301.5px;left:930.18px;width:300px;text-align:center;">S</span>
<span class="t" style="font-size:11.5px;line-height:16px;top:301.5px;left:940.94px;width:300px;text-align:center;">M</span>
<span class="t" style="font-size:11.5px;line-height:16px;top:301.5px;left:951.7px;width:300px;text-align:center;">T</span>
<span class="t" style="font-size:11.5px;line-height:16px;top:301.5px;left:962.46px;width:300px;text-align:center;">W</span>
<span class="t" style="font-size:11.5px;line-height:16px;top:301.5px;left:973.22px;width:300px;text-align:center;">T</span>
<span class="t" style="font-size:11.5px;line-height:16px;top:301.5px;left:983.98px;width:300px;text-align:center;">F</span>
<span class="t" style="font-size:11.5px;line-height:16px;top:301.5px;left:994.74px;width:300px;text-align:center;">S</span>
<span class="t" style="font-size:11.5px;line-height:16px;top:283.2px;letter-spacing:0.239px;left:1166.33px;">W8/9/26</span>
<span class="t" style="font-size:11.5px;line-height:16px;top:301.5px;left:1005.5px;width:300px;text-align:center;">S</span>
<span class="t" style="font-size:11.5px;line-height:16px;top:301.5px;left:1016.26px;width:300px;text-align:center;">M</span>
<span class="t" style="font-size:11.5px;line-height:16px;top:301.5px;left:1027.02px;width:300px;text-align:center;">T</span>
<span class="t" style="font-size:11.5px;line-height:16px;top:301.5px;left:1037.78px;width:300px;text-align:center;">W</span>
<span class="t" style="font-size:11.5px;line-height:16px;top:301.5px;left:1048.54px;width:300px;text-align:center;">T</span>
<span class="t" style="font-size:11.5px;line-height:16px;top:301.5px;left:1059.3px;width:300px;text-align:center;">F</span>
<span class="t" style="font-size:11.5px;line-height:16px;top:301.5px;left:1070.06px;width:300px;text-align:center;">S</span>
<div class="b" style="left:700px;top:282px;width:527px;height:342px;overflow:hidden">
<span class="t" style="font-size:11.5px;line-height:16px;top:56.5px;letter-spacing:0.238px;left:102.6px;">Adam</span>
<span class="t" style="font-size:11.5px;line-height:16px;top:94.5px;letter-spacing:0.238px;left:134.6px;">Adam</span>
<span class="t" style="font-size:11.5px;line-height:16px;top:113.5px;letter-spacing:-0.081px;left:187.6px;">David</span>
<span class="t" style="font-size:11.5px;line-height:16px;top:132.5px;letter-spacing:0.238px;left:209.6px;">Adam</span>
<span class="t" style="font-size:11.5px;line-height:16px;top:151.5px;letter-spacing:-0.081px;left:220.6px;">David</span>
<span class="t" style="font-size:11.5px;line-height:16px;top:170.5px;letter-spacing:-0.081px;left:261.6px;">David</span>
<span class="t" style="font-size:11.5px;line-height:16px;top:189.5px;letter-spacing:0.238px;left:272.6px;">Adam</span>
<span class="t" style="font-size:11.5px;line-height:16px;top:208.5px;letter-spacing:0.238px;left:325.6px;">Adam</span>
<span class="t" style="font-size:11.5px;line-height:16px;top:227.5px;letter-spacing:-0.219px;left:283.6px;">Alex</span>
<span class="t" style="font-size:11.5px;line-height:16px;top:246.5px;letter-spacing:-0.219px;left:293.6px;">Alex</span>
<span class="t" style="font-size:11.5px;line-height:16px;top:265.5px;letter-spacing:-0.081px;left:358.6px;">David</span>
<span class="t" style="font-size:11.5px;line-height:16px;top:284.5px;letter-spacing:0.238px;left:476.6px;">Adam</span>
<span class="t" style="font-size:11.5px;line-height:16px;top:303.5px;letter-spacing:0.238px;left:497.6px;">Adam</span>
</div>
<div class="b" style="left:1227px;top:283px;width:17px;height:341px;background:#f0f0f0"></div>
<div class="b" style="left:1228px;top:300px;width:15px;height:196.5px;background:#cdcdcd"></div>
<svg class="b" style="left:1231px;top:288px;" width="9" height="8" viewBox="0 0 9 8"><path d="M1.300 6.400L4.400 2.400L7.500 6.400" fill="none" stroke="#484848" stroke-width="2"/></svg>
<svg class="b" style="left:1231px;top:611px;" width="9" height="8" viewBox="0 0 9 8"><path d="M1.300 1.800L4.400 5.800L7.500 1.800" fill="none" stroke="#484848" stroke-width="2"/></svg>
<span class="t" style="font-size:12px;line-height:16px;top:626.5px;color:#222;left:-119px;width:300px;text-align:center;">↑</span>
<span class="t" style="font-size:12px;line-height:16px;top:626.5px;color:#222;left:-99px;width:300px;text-align:center;">↓</span>
<span class="t" style="font-size:12px;line-height:16px;top:626.5px;color:#222;left:-78.3px;width:300px;text-align:center;">←</span>
<span class="t" style="font-size:12px;line-height:16px;top:626.5px;color:#222;left:-58px;width:300px;text-align:center;">→</span>
<div class="b" style="left:102px;top:626px;width:471px;height:16px;background:#f0f0f0"></div>
<div class="b" style="left:119px;top:626px;width:393px;height:15px;background:#cdcdcd"></div>
<svg class="b" style="left:106px;top:629px;" width="8" height="9" viewBox="0 0 8 9"><path d="M6.6 1.3L2 4.5L6.6 7.7" fill="none" stroke="#404040" stroke-width="2"/></svg>
<svg class="b" style="left:561px;top:629px;" width="8" height="9" viewBox="0 0 8 9"><path d="M1.4 1.3L6 4.5L1.4 7.7" fill="none" stroke="#404040" stroke-width="2"/></svg>
<span class="t" style="font-size:11.5px;line-height:16px;top:627px;left:434px;width:300px;text-align:center;">1</span>
<span class="t" style="font-size:11.5px;line-height:16px;top:627px;left:454px;width:300px;text-align:center;">2</span>
<span class="t" style="font-size:11.5px;line-height:16px;top:627px;left:474px;width:300px;text-align:center;">3</span>
<span class="t" style="font-size:11.5px;line-height:16px;top:627px;left:494px;width:300px;text-align:center;">4</span>
<span class="t" style="font-size:11.5px;line-height:16px;top:627px;left:514px;width:300px;text-align:center;">5</span>
<span class="t" style="font-size:11px;line-height:16px;top:627px;font-family:'DejaVu Sans', sans-serif;left:533.5px;width:300px;text-align:center;">∞</span>
<div class="b" style="left:694px;top:282px;width:5px;height:362px;background:#f0f0f0"></div>
<span class="t" style="font-size:9px;line-height:16px;top:627px;font-family:'DejaVu Sans', sans-serif;color:#333;left:558.5px;width:300px;text-align:center;">↘</span>
<div class="b" style="left:719px;top:626px;width:386px;height:16px;background:#f0f0f0"></div>
<div class="b" style="left:736px;top:626px;width:189px;height:15px;background:#cdcdcd"></div>
<svg class="b" style="left:723px;top:629px;" width="8" height="9" viewBox="0 0 8 9"><path d="M6.6 1.3L2 4.5L6.6 7.7" fill="none" stroke="#404040" stroke-width="2"/></svg>
<svg class="b" style="left:1093px;top:629px;" width="8" height="9" viewBox="0 0 8 9"><path d="M1.4 1.3L6 4.5L1.4 7.7" fill="none" stroke="#404040" stroke-width="2"/></svg>
<svg class="b" style="left:1106px;top:627px;" width="16" height="16" viewBox="0 0 16 16"><g fill="none" stroke="#111"><circle cx="5.600" cy="6.400" r="2.700" stroke-width="1.100"/><circle cx="11.700" cy="6.400" r="2.700" stroke-width="1.100"/><path d="M6.800 7.800L14 14.600M10.500 7.800L3.300 14.600" stroke-width="3.200" stroke-linecap="square"/><path d="M6.800 7.800L14 14.600M10.500 7.800L3.300 14.600" stroke="#fff" stroke-width="1.300" stroke-linecap="square"/></g></svg>
<div class="b" style="left:1165px;top:624.5px;width:20px;height:20px;background:#c8c8c8"></div>
<span class="t" style="font-size:11.5px;line-height:16px;top:627px;left:985px;width:300px;text-align:center;">H</span>
<span class="t" style="font-size:11.5px;line-height:16px;top:627px;left:1005px;width:300px;text-align:center;">D</span>
<span class="t" style="font-size:11.5px;line-height:16px;top:627px;left:1025px;width:300px;text-align:center;">W</span>
<span class="t" style="font-size:11.5px;line-height:16px;top:627px;left:1045px;width:300px;text-align:center;">M</span>
<span class="t" style="font-size:11.5px;line-height:16px;top:627px;left:1066px;width:300px;text-align:center;">Q</span>
<span class="t" style="font-size:11.5px;line-height:16px;top:627px;left:1085px;width:300px;text-align:center;">Y</span>
<div class="b" style="left:23px;top:652px;width:125px;height:22px;background:#e1e1e1;border:1px solid #adadad"></div>
<svg class="b" style="left:26px;top:655px;" width="16" height="16" viewBox="0 0 16 16"><rect x="0.500" y="0.500" width="13.500" height="12" fill="#fff" stroke="#b8b8b8" stroke-width="0.8"/><rect x="0.200" y="0" width="14" height="2.300" fill="#3b73b9"/><rect x="0.600" y="2.500" width="3.900" height="9.800" fill="#e8806a"/><path d="M1 4.200H4M1 6.400H4M1 8.600H4" stroke="#fff" stroke-width="0.9"/><path d="M5 4.500H12" stroke="#777" stroke-width="0.8"/><rect x="6" y="6.300" width="4" height="1.600" fill="#3b73b9"/><path d="M2.300 9.300Q2.400 12.200 4.600 12.200H7" fill="none" stroke="#9b59b6" stroke-width="1.300"/><path d="M5.700 10.200L7.800 12.200L5.700 14.200" fill="none" stroke="#9b59b6" stroke-width="1.300"/><rect x="8.600" y="9.200" width="6.600" height="5.800" rx="0.8" fill="#b4b4b4" stroke="#8a8a8a" stroke-width="0.9"/></svg>
<span class="t" style="font-size:11px;line-height:16px;top:655.8px;letter-spacing:-0.094px;left:45.2px;">Export to MS Project</span>
<div class="b" style="left:0px;top:697px;width:1269px;height:1px;background:#8a8a8a"></div>
<div class="b" style="left:0px;top:698px;width:1269px;height:26px;background:#ffcc66"></div>
<span class="t" style="font-size:11px;line-height:16px;top:703.5px;letter-spacing:0.122px;left:5px;">Project Status: Draft</span>
<span class="t" style="font-size:11px;line-height:16px;top:703.5px;left:919px;width:300px;text-align:center;">A</span>
<svg class="b" style="left:1229px;top:702px;" width="18" height="18" viewBox="0 0 18 18"><rect x="2" y="2" width="14" height="9" rx="1" fill="none" stroke="#3f9a78" stroke-width="2"/><rect x="7.5" y="12" width="3" height="2" fill="#3f9a78"/><rect x="2" y="14" width="14" height="3" rx="1" fill="#3f9a78"/><rect x="4" y="15" width="6" height="1" fill="#ffcc66"/><rect x="12" y="15" width="2" height="1" fill="#ffcc66"/></svg>
<svg class="b" style="left:1257px;top:714px;" width="9" height="9" viewBox="0 0 9 9"><g fill="#a8b0c4"><rect x="6.3" y="0" width="2" height="2"/><rect x="3.1" y="3" width="2" height="2"/><rect x="6.3" y="3" width="2" height="2"/><rect x="0" y="6" width="2" height="2"/><rect x="3.1" y="6" width="2" height="2"/><rect x="6.3" y="6" width="2" height="2"/></g></svg>
<div class="b" style="left:0px;top:724px;width:1269px;height:1px;background:#5a5a5a"></div>
<div class="b" style="left:0px;top:0px;width:2px;height:725px;background:linear-gradient(90deg,#5f5f5f 0,#5f5f5f 1px,#9a9a9a 1px,#9a9a9a 1.5px,transparent 1.5px)"></div>
<div class="b" style="left:0px;top:0px;width:1269px;height:1px;background:#4a4a4a"></div>
<div class="b" style="left:1267px;top:0px;width:2px;height:725px;background:linear-gradient(90deg,#b0b0b0 0,#b0b0b0 0.5px,#6a6a6a 0.5px)"></div>
</body></html>
